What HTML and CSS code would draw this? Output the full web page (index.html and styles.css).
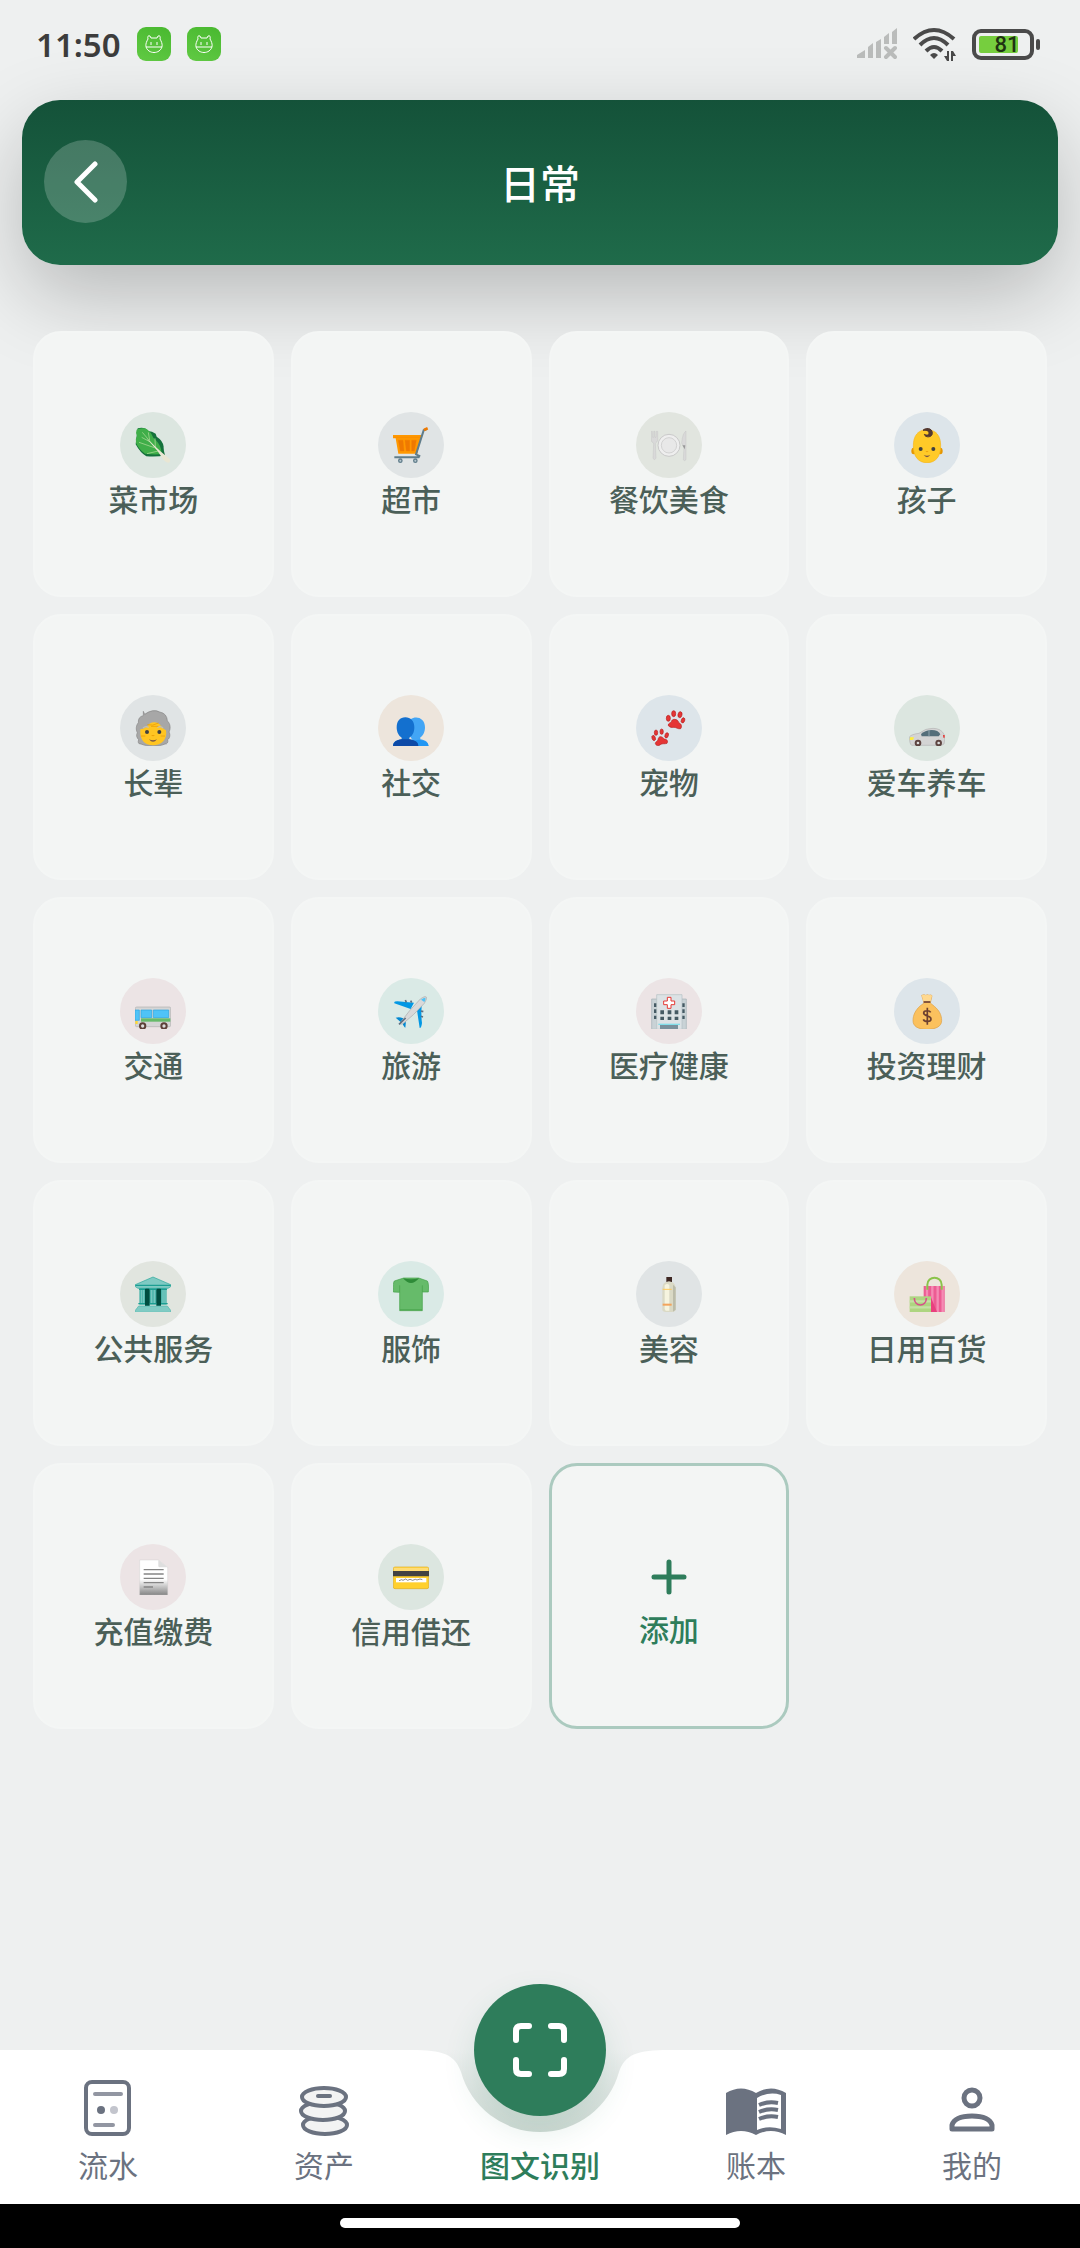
FILE: index.html
```html
<!DOCTYPE html>
<html lang="zh-CN">
<head>
    <meta charset="UTF-8">
    <meta name="viewport" content="width=device-width, initial-scale=1.0">
    <title>日常</title>
    <link rel="stylesheet" href="styles.css">
</head>
<body>
    <div class="status-bar">
        <div class="status-left">
            <span class="clock">11:50</span>
            <span class="app-badge">
                <svg viewBox="0 0 34 34"><path d="M11 12q-1-4 2-3l1 2h6l1-2q3-1 2 3c3 5 3 9-1 12-3 2-7 2-10 0-4-3-4-7-1-12zM9 20h16"/><path d="M14 15v3M20 15v3" stroke-width="2"/></svg>
            </span>
            <span class="app-badge">
                <svg viewBox="0 0 34 34"><path d="M11 12q-1-4 2-3l1 2h6l1-2q3-1 2 3c3 5 3 9-1 12-3 2-7 2-10 0-4-3-4-7-1-12zM9 20h16"/><path d="M14 15v3M20 15v3" stroke-width="2"/></svg>
            </span>
        </div>
        <div class="status-right">
            <svg class="signal" viewBox="0 0 40 32">
                <path d="M0 30v-3l8-5v8zM11 30V19l5-4v15zM19 30V14l5-3v19zM27 16V9l5-4v11zM35 16V4l5-4v16z" fill="#babcbb"/>
                <path d="M29 20l9 9M38 20l-9 9" stroke="#babcbb" stroke-width="4" stroke-linecap="round"/>
            </svg>
            <svg class="wifi" viewBox="0 0 43 34">
                <g fill="none" stroke="#4a4a4a" stroke-width="4">
                    <path d="M1 12Q21-6 41 12"/>
                    <path d="M7 18Q21 4 35 18"/>
                    <path d="M13 24Q21 16 29 24"/>
                </g>
                <path d="M17 28q4-4 8 0l-4 4z" fill="#4a4a4a"/>
                <path d="M36 24v10h-2l-3-5h3v-5zM38 34V24h2l3 5h-3v5z" fill="#4a4a4a"/>
            </svg>
            <span class="battery"><span class="battery-fill"></span><span class="battery-text">81</span></span>
        </div>
    </div>

    <header class="header">
        <button class="back-button" aria-label="返回">
            <svg viewBox="0 0 24 42"><path d="M21 3L3 21l18 18"/></svg>
        </button>
        <h1 class="title">日常</h1>
    </header>

    <main class="grid">
        <button class="card">
            <span class="icon green">
                <svg viewBox="0 0 108 108">
                    <path d="M8 4Q30-1 38 12q14 0 24 8l3 9q19 12 21 30-1 9 4 26-20 5-56 3Q16 78 2 52z" fill="#14713c"/>
                    <path d="M5 8Q10 2 30 4q17 8 25 28 19 16 23 34l2 15q-20 3-50-1Q12 68 3 48 0 36 6 27 1 16 5 8z" fill="#3fae49"/>
                    <path d="M22 16l44 52M20 31l26 14M12 46l46 16M36 80l34-8M40 16l4 24M60 34l1 26" stroke="#b9dfa0" stroke-width="2" fill="none"/>
                    <path d="M34 34l44 40 26 22q4 6-2 11-7 2-16-8L66 70z" fill="#e9e6d3"/>
                </svg>
            </span>
            <span class="label">菜市场</span>
        </button>
        <button class="card">
            <span class="icon gray">
                <svg viewBox="0 0 108 108">
                    <path d="M0 24h86v10h-4l-9 46H16L8 34H0z" fill="#ff9800"/>
                    <path d="M16 40h14l3 32H22zM36 40h14v32H40zM56 40h14l-6 32h-8zM2 31h80" fill="#ef7900" stroke="#ef7900"/>
                    <path d="M101 6l-9 4-23 72 10 5-2 4H4" fill="none" stroke="#607d8b" stroke-width="6"/>
                    <path d="M93 9l11-5" stroke="#ef7900" stroke-width="8"/>
                    <g fill="#b8c8cf" stroke="#607d8b" stroke-width="4"><circle cx="22" cy="101" r="5"/><circle cx="67" cy="101" r="5"/></g>
                </svg>
            </span>
            <span class="label">超市</span>
        </button>
        <button class="card">
            <span class="icon olive">
                <svg viewBox="0 0 108 108">
                    <path d="M1 13h3l1 18h3V13h4v18h3l1-18h4v26q-2 8-7 10l2 45q-5 8-9 0l2-45q-7-3-7-10z" fill="#d9d9d9" stroke="#bbb"/>
                    <circle cx="54" cy="55" r="33" fill="#eee" stroke="#c9c9c9" stroke-width="3"/>
                    <circle cx="54" cy="55" r="23" fill="#e8e8e8" stroke="#d2d2d2" stroke-width="3"/>
                    <path d="M105 12v86q-5 6-8 0l2-42q-8-2-7-10 3-28 13-34z" fill="#d9d9d9" stroke="#bbb"/>
                    <path d="M94 55h9l-2 12z" fill="#999"/>
                </svg>
            </span>
            <span class="label">餐饮美食</span>
        </button>
        <button class="card">
            <span class="icon blue">
                <svg viewBox="0 0 108 108">
                    <ellipse cx="14" cy="72" rx="7" ry="10" fill="#e59600"/>
                    <ellipse cx="94" cy="72" rx="7" ry="10" fill="#e59600"/>
                    <path d="M54 8C26 8 13 28 13 56c0 34 16 51 41 51s41-17 41-51C95 28 82 8 54 8z" fill="#ffca28" stroke="#f6b51a" stroke-width="2"/>
                    <path d="M42 10c6-8 28-9 28 9 0 13-22 14-24 3 5 3 14 4 14-4 0-7-9-9-18-8z" fill="#543930" stroke="#543930" stroke-width="3"/>
                    <circle cx="35" cy="66" r="6" fill="#404040"/><circle cx="73" cy="66" r="6" fill="#404040"/>
                    <path d="M49 73h10q-5 5-10 0z" fill="#e59600"/>
                    <path d="M44 84q10 5 20 0-10 13-20 0z" fill="#795548"/>
                </svg>
            </span>
            <span class="label">孩子</span>
        </button>

        <button class="card">
            <span class="icon gray">
                <svg viewBox="0 0 108 108">
                    <path d="M25 4l4 9Q54-5 74 6q22 4 23 27c10 8 10 24 5 33 5 9 2 19-4 23 2 7-1 14-8 13-20 9-54 8-72 0-8 1-10-6-7-13-6-6-8-13-4-21-5-9-4-22 3-30Q9 20 25 17z" fill="#a7a7a7" stroke="#858585" stroke-width="2"/>
                    <path d="M16 58q16-3 27-17 22-11 36 8 6 8 14 12c5 28-14 45-39 45S13 90 16 58z" fill="#ffc522"/>
                    <path d="M24 54q7-7 17-2M67 52q10-5 17 2" fill="none" stroke="#bdbdbd" stroke-width="4"/>
                    <path d="M37 44q15 5 34-5M48 49h22M18 78h13M77 78h13" fill="none" stroke="#e59600" stroke-width="2"/>
                    <circle cx="36" cy="66" r="6" fill="#404040"/><circle cx="73" cy="66" r="6" fill="#404040"/>
                    <path d="M48 76h12q-6 5-12 0z" fill="#e59600"/>
                    <path d="M42 88q12 6 24 0-12 15-24 0z" fill="#795548"/>
                </svg>
            </span>
            <span class="label">长辈</span>
        </button>
        <button class="card">
            <span class="icon peach">
                <svg viewBox="0 0 108 108">
                    <path d="M53 28c16-12 43-4 43 24 0 14-6 26-14 30v6c12 2 24 6 24 20H70L52 80z" fill="#42a5f5"/>
                    <path d="M75 108c0-8-5-14-9-17l12-2q28 3 29 19z" fill="#2196f3"/>
                    <path d="M37 22c-16 0-26 11-26 30 0 14 6 26 15 31v5C12 90 0 94 0 108h76c0-14-12-18-27-20v-5c10-5 15-17 15-31 0-19-11-30-27-30z" fill="#1370cf"/>
                    <path d="M26 88h23q27 4 27 20H0q1-17 26-20z" fill="#0d4aa7"/>
                </svg>
            </span>
            <span class="label">社交</span>
        </button>
        <button class="card">
            <span class="icon blue">
                <svg viewBox="0 0 108 108">
                    <g fill="#e53535" stroke="#b71c1c" stroke-width="2">
                        <path d="M70 28c8 0 12 4 13 10 10 4 10 13 6 18-8 2-13-4-20-4-7 1-12 0-17-5-2-8 8-8 9-12 1-4 4-7 9-7z"/>
                        <ellipse cx="52" cy="25" rx="6" ry="9"/><ellipse cx="68" cy="11" rx="6" ry="9"/><ellipse cx="87" cy="14" rx="6" ry="9" transform="rotate(12 87 14)"/><ellipse cx="96" cy="31" rx="5" ry="8" transform="rotate(20 96 31)"/>
                        <path d="M28 80c6 0 8 4 12 7 8 1 12 6 8 13-8 3-14-1-20 4-6 5-14 3-15-4 1-6 7-6 8-11 1-5 3-9 7-9z"/>
                        <ellipse cx="8" cy="84" rx="5" ry="8" transform="rotate(-18 8 84)"/><ellipse cx="15" cy="68" rx="5" ry="8"/><ellipse cx="32" cy="65" rx="5" ry="8"/><ellipse cx="47" cy="76" rx="5" ry="8" transform="rotate(20 47 76)"/>
                    </g>
                </svg>
            </span>
            <span class="label">宠物</span>
        </button>
        <button class="card">
            <span class="icon green">
                <svg viewBox="0 0 108 108">
                    <path d="M2 80q5-7 28-10 20-16 42-15 24 0 33 18 4 18 0 29l-8 4H8q-7-4-6-26z" fill="#d4d4d4" stroke="#b4b4b4" stroke-width="2"/>
                    <path d="M36 72q14-12 32-12 20 0 26 13l-5 6H38z" fill="#546e7a"/>
                    <path d="M60 60v19" stroke="#90a4ae" stroke-width="3"/>
                    <path d="M3 82h12l-3 8H2z" fill="#ffee3b"/><path d="M102 75h5v8h-4z" fill="#e53935"/>
                    <g fill="#ddd" stroke="#5d4440" stroke-width="6"><circle cx="27" cy="99" r="7"/><circle cx="89" cy="99" r="7"/></g>
                </svg>
            </span>
            <span class="label">爱车养车</span>
        </button>

        <button class="card">
            <span class="icon pink">
                <svg viewBox="0 0 108 108">
                    <rect x="1" y="42" width="106" height="59" rx="4" fill="#d5d5d5" stroke="#b0b0b0" stroke-width="2"/>
                    <path d="M0 51h13v31H0zM18 51h32v23H18zM55 51h46v23H55z" fill="#4fc3f7" stroke="#2aa5df" stroke-width="2"/>
                    <path d="M18 76h88v10H18z" fill="#66bb6a"/>
                    <path d="M1 84h7v9H1z" fill="#fdd835"/>
                    <g fill="#ddd" stroke="#5d4037" stroke-width="6"><circle cx="23" cy="99" r="8"/><circle cx="87" cy="99" r="8"/></g>
                </svg>
            </span>
            <span class="label">交通</span>
        </button>
        <button class="card">
            <span class="icon teal">
                <svg viewBox="0 0 108 108">
                    <path d="M4 31q-2-6 9-6l50 4-10 19zM72 52l14-14q-2 32 1 52-2 16-7 15z" fill="#0398e4"/>
                    <path d="M8 74q12-3 22 2l6 4q5 10 1 24-4-1-9-14l-6-4z" fill="#0288d1"/>
                    <path d="M20 92Q48 52 82 18q14-10 18-6 3 5-6 19-32 36-64 61-7 3-10 0z" fill="#d9d9d9" stroke="#aaa" stroke-width="2"/>
                    <path d="M84 20q9-7 13-6 2 5-3 13z" fill="#4fc3f7"/>
                    <path d="M37 21l3 7M53 23l3 6M84 54l7 2M84 70l6 2M18 94l20-19" stroke="#607080" stroke-width="5"/>
                </svg>
            </span>
            <span class="label">旅游</span>
        </button>
        <button class="card">
            <span class="icon pink">
                <svg viewBox="0 0 108 108">
                    <path d="M2 18h104v91H2z" fill="#c9d2d6" stroke="#a4b1b7" stroke-width="2"/>
                    <path d="M17 5h76v104H17z" fill="#dce2e5" stroke="#b3bfc4" stroke-width="2"/>
                    <path d="M9 31h7v11H9zM9 49h7v11H9zM9 68h7v10H9zM94 31h7v11h-7zM94 49h7v11h-7zM94 68h7v10h-7zM28 52h11v12H28zM50 52h11v12H50zM71 52h11v12H71zM28 71h11v10H28zM50 71h11v10H50zM71 71h11v10H71z" fill="#455a64"/>
                    <path d="M49 13h11v11h11v11H60v11H49V35H38V24h11z" fill="#fff" stroke="#e53935" stroke-width="3"/>
                    <path d="M22 92h65v4H22z" fill="#80deea"/><path d="M27 96h54v13H27z" fill="#78909c"/>
                </svg>
            </span>
            <span class="label">医疗健康</span>
        </button>
        <button class="card">
            <span class="icon blue">
                <svg viewBox="0 0 108 108">
                    <path d="M38 7q8-4 12 0 6-4 10 0 6-3 9 1l-5 22 12 10c14 12 22 25 22 43 0 16-16 26-44 26s-42-10-42-26c0-18 8-31 20-43l13-10z" fill="#fbc15e" stroke="#dca047" stroke-width="2"/>
                    <path d="M38 7q8-4 12 0 6-4 10 0 6-3 9 1l-5 18H44z" fill="#ffd990"/>
                    <path d="M44 27h20" stroke="#6d3e33" stroke-width="5"/>
                    <path d="M65 58c-3-6-21-7-21 2 0 11 22 6 22 18 0 10-20 9-23 1M55 44v51" fill="none" stroke="#6d4030" stroke-width="5"/>
                </svg>
            </span>
            <span class="label">投资理财</span>
        </button>

        <button class="card">
            <span class="icon olive">
                <svg viewBox="0 0 108 108">
                    <path d="M13 34h82v52H13z" fill="#4db6ac"/>
                    <path d="M30 38q7-6 14 0v52H30zM64 38q7-6 14 0v52H64z" fill="#004d40"/>
                    <path d="M20 42v40M26 42v40M50 42v40M58 42v40M84 42v40M90 42v40" stroke="#80cbc4" stroke-width="3"/>
                    <path d="M1 26L54 3l53 23v6l-8 5H9l-8-5z" fill="#7fcac3" stroke="#26a69a" stroke-width="2"/>
                    <path d="M1 28h106M12 40h18M44 40h20M78 40h18M10 83h20M44 83h20M78 83h20" stroke="#1c9e92" stroke-width="4"/>
                    <path d="M11 90h86l10 13v6H1v-6z" fill="#80cbc4" stroke="#4db6ac" stroke-width="2"/>
                </svg>
            </span>
            <span class="label">公共服务</span>
        </button>
        <button class="card">
            <span class="icon teal">
                <svg viewBox="0 0 108 108">
                    <path d="M32 6L4 15Q0 19 1 48l19 1v55h68V48h18q2-26-3-33L77 6z" fill="#66bb6a" stroke="#43a047" stroke-width="2"/>
                    <path d="M30 7q24 6 48 0-12 14-24 14T30 7z" fill="#2e8b38"/>
                    <path d="M20 28v21M88 28v20M21 101h66" stroke="#43a047" stroke-width="2"/>
                </svg>
            </span>
            <span class="label">服饰</span>
        </button>
        <button class="card">
            <span class="icon gray">
                <svg viewBox="0 0 108 108">
                    <path d="M46 3h17v15H46z" fill="#3e2723"/>
                    <path d="M34 36q0-18 20-20 19 2 20 20v67q-4 5-10 5H44q-8 0-10-5z" fill="#dad9c5"/>
                    <path d="M41 28q8-8 14 0v76H44l-3-5z" fill="#f6f4df"/>
                    <path d="M66 26l8 8v67l-8 6z" fill="#bcbcaa"/>
                    <path d="M35 40h27" stroke="#ffca5b" stroke-width="3"/><path d="M35 86h27" stroke="#f3a45c" stroke-width="6"/>
                </svg>
            </span>
            <span class="label">美容</span>
        </button>
        <button class="card">
            <span class="icon peach">
                <svg viewBox="0 0 108 108">
                    <path d="M44 30h63v78H44z" fill="#ec5c93"/>
                    <path d="M54 30v74M70 30v78M86 30v78M101 30v78" stroke="#f58bb4" stroke-width="7"/>
                    <path d="M55 41V26c0-28 43-28 43 0v15" fill="none" stroke="#8bc34a" stroke-width="6"/>
                    <path d="M2 61h64v47H2z" fill="#aed581"/><path d="M2 76h64M2 94h64" stroke="#c5e1a5" stroke-width="7"/>
                    <path d="M16 66c0 28 36 28 36 0" fill="none" stroke="#d84f8b" stroke-width="5"/>
                    <path d="M66 64l18 44H66z" fill="#e9407e"/>
                </svg>
            </span>
            <span class="label">日用百货</span>
        </button>

        <button class="card">
            <span class="icon pink">
                <svg viewBox="0 0 108 108">
                    <defs><linearGradient id="paper" x2="0" y2="1"><stop offset=".55" stop-color="#fff"/><stop offset="1" stop-color="#858585"/></linearGradient></defs>
                    <path d="M14 3h56l28 22v83H14z" fill="url(#paper)" stroke="#c4c4c4"/>
                    <path d="M70 3l28 22H74q-4 0-4-5z" fill="#dedede"/>
                    <path d="M26 32h60M26 45h60M26 58h60M26 71h60M26 84h28" stroke="#858585" stroke-width="4"/>
                </svg>
            </span>
            <span class="label">充值缴费</span>
        </button>
        <button class="card">
            <span class="icon green">
                <svg viewBox="0 0 108 108">
                    <rect x="1" y="24" width="106" height="65" rx="5" fill="#ffd02e" stroke="#e0ac20" stroke-width="2"/>
                    <path d="M3 26h102v10H3z" fill="#ffdc75"/>
                    <path d="M0 36h108v16H0z" fill="#424242"/><path d="M9 57h91v13H9z" fill="#fff"/>
                    <path d="M18 65l8-3 4 2 8-4 6 4 7-3 8 3 8-3 5 2 9-3 7 2" fill="none" stroke="#555" stroke-width="2"/>
                </svg>
            </span>
            <span class="label">信用借还</span>
        </button>
        <button class="card add-card">
            <span class="plus">
                <svg viewBox="0 0 36 36"><path d="M18 3v30M3 18h30"/></svg>
            </span>
            <span class="label">添加</span>
        </button>
    </main>

    <nav class="tab-bar">
        <svg class="notch" viewBox="0 0 256 84">
            <defs>
                <linearGradient id="notch-fill" x2="0" y2="1">
                    <stop offset="0" stop-color="#eef0f0"/>
                    <stop offset="1" stop-color="#d0dad5"/>
                </linearGradient>
            </defs>
            <path d="M0 0C30 0 43 4 49 22A82 82 0 0 0 207 22C213 4 226 0 256 0z" fill="url(#notch-fill)"/>
        </svg>
        <a class="tab" href="#">
            <svg class="tab-icon" viewBox="0 0 60 56">
                <rect x="8" y="2" width="43" height="52" rx="6" fill="none" stroke="#6b7280" stroke-width="4"/>
                <path d="M17 14h26M17 45h18" stroke="#9296a2" stroke-width="4" stroke-linecap="round"/>
                <circle cx="23" cy="30" r="4" fill="#6b7280"/><circle cx="36" cy="30" r="4" fill="#c3c5cd"/>
            </svg>
            <span>流水</span>
        </a>
        <a class="tab" href="#">
            <svg class="tab-icon" viewBox="0 0 60 56">
                <g fill="#f3f3f3" stroke="#6b7280" stroke-width="4">
                    <ellipse cx="31" cy="45" rx="22" ry="9"/>
                    <ellipse cx="29" cy="31" rx="22" ry="9"/>
                    <ellipse cx="30" cy="17" rx="22" ry="9"/>
                </g>
                <path d="M24 16h12" stroke="#6b7280" stroke-width="4" stroke-linecap="round"/>
            </svg>
            <span>资产</span>
        </a>
        <a class="tab active" href="#">
            <span class="scan">
                <svg viewBox="0 0 56 56"><path d="M4 18V9q0-5 5-5h8M39 4h8q5 0 5 5v9M52 38v9q0 5-5 5h-8M17 52H9q-5 0-5-5v-9"/></svg>
            </span>
            <span>图文识别</span>
        </a>
        <a class="tab" href="#">
            <svg class="tab-icon" viewBox="0 0 60 56">
                <path d="M0 13Q15 4 30 13 45 4 60 13v42q-15-8-30 0-15-8-30 0z" fill="#6b7280"/>
                <path d="M31 18q12-7 24-3v34q-13-4-24 1z" fill="#fff"/>
                <path d="M33 25q9-4 19-2M33 32q9-4 19-2M33 39q9-4 19-2" fill="none" stroke="#6b7280" stroke-width="4"/>
            </svg>
            <span>账本</span>
        </a>
        <a class="tab" href="#">
            <svg class="tab-icon" viewBox="0 0 60 56">
                <g fill="none" stroke="#6b7280" stroke-width="5">
                    <circle cx="30" cy="18" r="8"/>
                    <path d="M10 49v-4q3-9 20-9t20 9v4z" stroke-linejoin="round"/>
                </g>
            </svg>
            <span>我的</span>
        </a>
    </nav>
    <div class="system-bar"><span class="home-pill"></span></div>
</body>
</html>
```
FILE: styles.css
```css
* {
    box-sizing: border-box;
}

body {
    margin: 0;
    min-height: 100vh;
    display: flex;
    flex-direction: column;
    background-color: #eef0f0;
    color: #4b5f58;
    font-family: "Noto Sans CJK SC", sans-serif;
}

button {
    border: none;
    padding: 0;
    font-family: inherit;
    cursor: pointer;
}

svg {
    display: block;
}

/* Status bar */
.status-bar {
    height: 100px;
    padding: 0 40px 12px 36px;
    display: flex;
    justify-content: space-between;
    align-items: center;
}

.status-left,
.status-right {
    display: flex;
    align-items: center;
    gap: 16px;
}

.clock {
    color: #3c3c3c;
    font-family: "Noto Sans", sans-serif;
    font-size: 33px;
    font-weight: 600;
}

.app-badge {
    width: 34px;
    height: 34px;
    border-radius: 9px;
    background: linear-gradient(20deg, #62cb45, #48b82f);
}

.app-badge path {
    fill: none;
    stroke: white;
    stroke-width: 1;
}

.signal {
    width: 40px;
    height: 32px;
}

.wifi {
    width: 43px;
    height: 34px;
}

.battery {
    position: relative;
    width: 62px;
    height: 31px;
    margin-right: 6px;
    padding: 3px;
    border: 4px solid #4a4a4a;
    border-radius: 9px;
}

.battery::after {
    content: "";
    position: absolute;
    top: 6px;
    right: -10px;
    width: 4px;
    height: 11px;
    border-radius: 2px;
    background-color: #4a4a4a;
}

.battery-fill {
    display: block;
    width: 81%;
    height: 100%;
    border-radius: 2px;
    background-color: #76ce3e;
}

.battery-text {
    position: absolute;
    inset: 0;
    padding-left: 8px;
    color: #1f3312;
    font-family: "Roboto", sans-serif;
    font-size: 22px;
    font-weight: 500;
    line-height: 24px;
    text-align: center;
}

/* Header */
.header {
    display: grid;
    grid-template-columns: 83px 1fr 83px;
    align-items: center;
    height: 165px;
    margin: 0 22px;
    padding: 0 22px 2px;
    border-radius: 38px;
    background: linear-gradient(#145239, #1f6b4a);
    box-shadow: 0 30px 82px rgba(0, 0, 0, 0.23);
}

.back-button {
    display: flex;
    justify-content: center;
    align-items: center;
    width: 83px;
    height: 83px;
    border-radius: 50%;
    background-color: rgba(255, 255, 255, 0.2);
}

.back-button svg {
    width: 24px;
    height: 42px;
}

.back-button path {
    fill: none;
    stroke: white;
    stroke-width: 5;
    stroke-linecap: round;
    stroke-linejoin: round;
}

.title {
    margin: 0;
    color: white;
    font-size: 40px;
    font-weight: 500;
    text-align: center;
}

/* Category grid */
.grid {
    flex-grow: 1;
    display: grid;
    grid-template-columns: repeat(4, 1fr);
    grid-auto-rows: 266px;
    align-content: start;
    gap: 17px;
    padding: 66px 33px;
}

.card {
    display: flex;
    flex-direction: column;
    justify-content: center;
    align-items: center;
    gap: 4px;
    padding-bottom: 2px;
    border: 2px solid #f4f6f5;
    border-radius: 28px;
    background-color: #f3f5f4;
    color: #4b5f58;
}

.icon {
    display: flex;
    justify-content: center;
    align-items: center;
    width: 66px;
    height: 66px;
    border-radius: 50%;
}

.icon svg,
.plus svg {
    width: 36px;
    height: 36px;
}

.green { background-color: #dce6e0; }
.gray { background-color: #e0e4e5; }
.olive { background-color: #e1e5df; }
.blue { background-color: #dde5ea; }
.peach { background-color: #ede5dc; }
.pink { background-color: #ece4e5; }
.teal { background-color: #daeae6; }

.label {
    font-size: 30px;
    font-weight: 500;
    line-height: 32px;
}

.add-card {
    border: 3px solid #abcabf;
    color: #2e7d5b;
}

.plus {
    display: flex;
    align-items: center;
    height: 62px;
}

.plus path {
    stroke: #2e7d5b;
    stroke-width: 5;
    stroke-linecap: round;
}

/* Bottom tabs */
.tab-bar {
    position: relative;
    display: grid;
    grid-template-columns: repeat(5, 1fr);
    height: 154px;
    padding-top: 30px;
    background-color: white;
}

.notch {
    position: absolute;
    top: 0;
    left: 50%;
    width: 256px;
    height: 84px;
    transform: translateX(-50%);
}

.tab {
    display: flex;
    flex-direction: column;
    align-items: center;
    gap: 10px;
    color: #6b7280;
    font-size: 30px;
    line-height: 36px;
    text-decoration: none;
}

.tab-icon {
    width: 60px;
    height: 56px;
}

.active {
    position: relative;
    padding-top: 66px;
    color: #2e7d5b;
    font-weight: 500;
}

/* Round scan button sits in the notch, half above the bar */
.scan {
    position: absolute;
    top: -96px;
    display: flex;
    justify-content: center;
    align-items: center;
    width: 132px;
    height: 132px;
    border-radius: 50%;
    background-color: #2e7d5b;
    box-shadow: 0 14px 32px rgba(46, 125, 91, 0.14);
}

.scan svg {
    width: 56px;
    height: 56px;
}

.scan path {
    fill: none;
    stroke: white;
    stroke-width: 6;
    stroke-linecap: round;
}

.system-bar {
    display: flex;
    justify-content: center;
    align-items: center;
    height: 44px;
    padding-bottom: 6px;
    background-color: black;
}

.home-pill {
    width: 37%;
    height: 10px;
    border-radius: 5px;
    background-color: white;
}
```
